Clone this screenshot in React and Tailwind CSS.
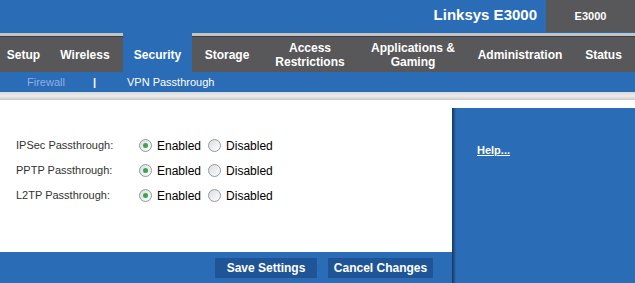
import React from "react";

const tabs = [
  { label: "Setup", w: "w-[47px]" },
  { label: "Wireless", w: "w-[76px]" },
  { label: "Security", w: "w-[69px]", active: true },
  { label: "Storage", w: "w-[70px]" },
  { label: ["Access", "Restrictions"], w: "w-[96px]" },
  { label: ["Applications &", "Gaming"], w: "w-[110px]" },
  { label: "Administration", w: "w-[104px]" },
  { label: "Status", w: "w-[63px]" },
];

function Radio({ checked }) {
  return (
    <span className="relative inline-flex h-[13px] w-[13px] items-center justify-center rounded-full border border-[#8a9aaa] bg-gradient-to-br from-[#dcdcdc] to-white">
      {checked && <span className="h-[5px] w-[5px] rounded-full bg-[#3ea34a]" />}
    </span>
  );
}

function Row({ label }) {
  return (
    <div className="flex h-[25px] items-center">
      <div className="w-[139px] pl-[16px] text-[11px] text-[#333]">{label}</div>
      <Radio checked />
      <span className="ml-[5px] text-[12px] text-black">Enabled</span>
      <span className="ml-[7px] flex"><Radio /></span>
      <span className="ml-[5px] text-[12px] text-black">Disabled</span>
    </div>
  );
}

export default function App() {
  return (
    <div className="h-[283px] w-[635px] overflow-hidden bg-white font-['Liberation_Sans',Arial,sans-serif]">
      <div className="flex h-[33px] bg-[#2a6cb6]">
        <div className="flex flex-1 items-center justify-end pr-[9px] pb-[3px] text-[15px] font-bold text-white">Linksys E3000</div>
        <div className="flex h-[32px] w-[89px] items-center justify-center bg-[#58585a] text-[11px] font-bold text-white">E3000</div>
      </div>
      <div className="flex h-[39px]">
        {tabs.map((t, i) => (
          <div
            key={i}
            className={`${t.w} flex shrink-0 flex-col items-center justify-center text-[12px] font-bold leading-[14px] text-white ${
              t.active ? "bg-[#2a6cb6] pt-[4px]" : "border-t-[3px] border-[#c4c4c4] bg-[#58585a] pt-[2px] shadow-[inset_0_1px_0_#3e3e3e]"
            }`}
          >
            {Array.isArray(t.label) ? t.label.map((l) => <span key={l}>{l}</span>) : <span>{t.label}</span>}
          </div>
        ))}
      </div>
      <div className="flex h-[20px] items-center bg-[#2a6cb6] text-[11px] text-white">
        <span className="ml-[27px] text-[#94aee6]">Firewall</span>
        <span className="ml-[28px] font-bold">|</span>
        <span className="ml-[31px]">VPN Passthrough</span>
      </div>
      <div className="h-[8px] bg-gradient-to-b from-[#d8d8d8] via-[#ececec] to-[#c8c8c8]" />
      <div className="flex h-[183px]">
        <div className="flex w-[452px] flex-col">
          <div className="flex flex-1 flex-col pt-[33px]">
            <Row label="IPSec Passthrough:" />
            <Row label="PPTP Passthrough:" />
            <Row label="L2TP Passthrough:" />
          </div>
          <div className="flex h-[31px] items-start gap-[11px] bg-[#2a6cb6] pt-[6px] pl-[215px]">
            <button className="h-[20px] w-[102px] bg-[#1f5596] text-[12px] font-bold text-white">Save Settings</button>
            <button className="h-[20px] w-[105px] bg-[#1f5596] text-[12px] font-bold text-white">Cancel Changes</button>
          </div>
        </div>
        <div className="flex flex-1 flex-col pt-[8px]">
          <div className="flex flex-1 bg-[#2a6cb6]">
            <div className="w-[4px] bg-gradient-to-r from-[#17345a] to-[#2a6cb6]" />
            <div className="pt-[29px] pl-[21px]">
              <span className="text-[11px] font-bold text-white underline">Help...</span>
            </div>
          </div>
        </div>
      </div>
    </div>
  );
}
